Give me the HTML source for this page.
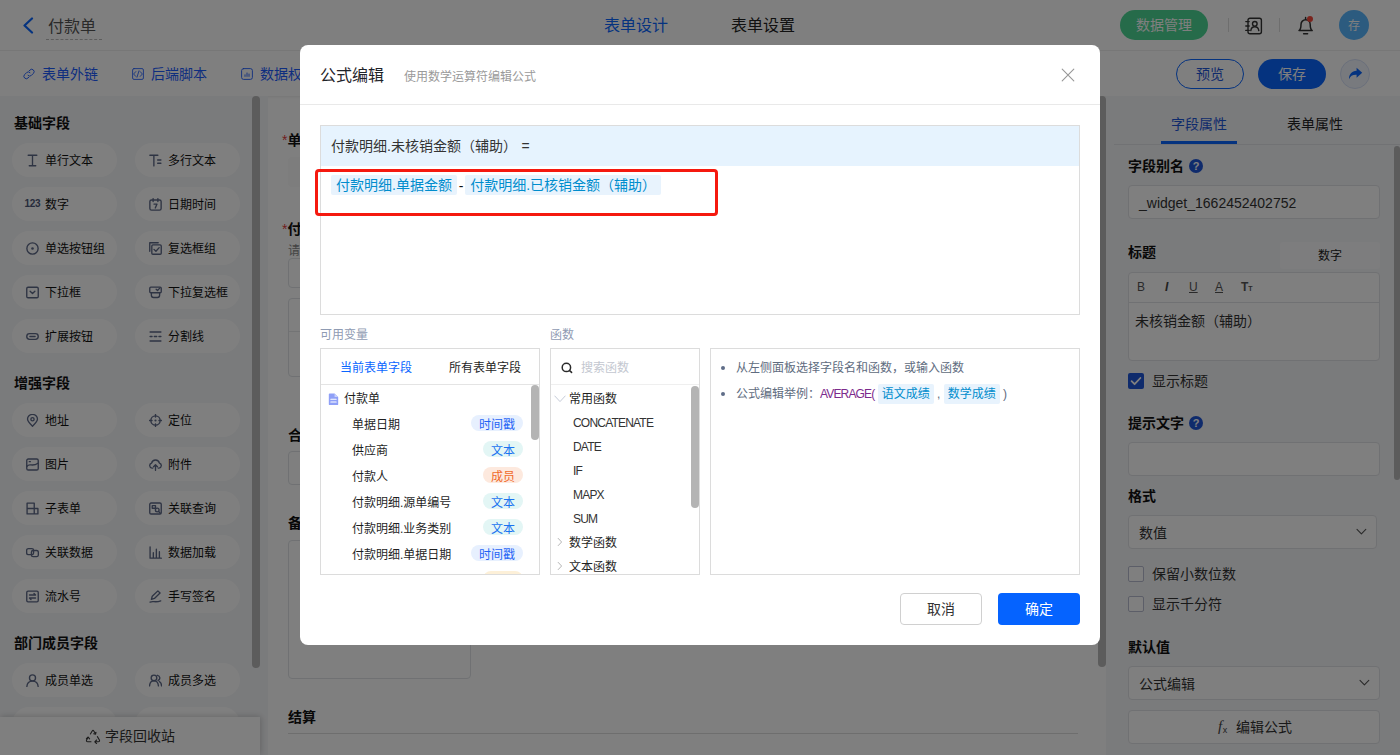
<!DOCTYPE html>
<html lang="zh-CN"><head><meta charset="utf-8"><title>公式编辑</title>
<style>
html,body{margin:0;padding:0}
body{width:1400px;height:755px;overflow:hidden;position:relative;background:#fff;font-family:"Liberation Sans","Noto Sans CJK SC",sans-serif;}
.t{position:absolute;white-space:nowrap;}
.b{position:absolute;box-sizing:border-box;}
#app,#mask,#modal{position:absolute;left:0;top:0;}
#app{width:1400px;height:755px;overflow:hidden;background:#fff}
#mask{width:1400px;height:755px;background:rgba(0,0,0,.5)}
#modal{left:300px;top:45px;width:800px;height:600px;background:#fff;border-radius:8px;overflow:hidden}
.pill{position:absolute;width:105px;height:34px;border-radius:17px;background:#fff}
.inp{position:absolute;box-sizing:border-box;border:1px solid #e0e2e6;border-radius:4px;background:#fff}
.tag{position:absolute;box-sizing:border-box;height:16px;line-height:20px;border-radius:8px;font-size:12px;text-align:center;white-space:nowrap}
.chip{display:inline-block;background:#e8f3fd;color:#008dcd;border-radius:2px;}
</style></head><body>
<div id="app">
<div class="b" style="left:0px;top:50px;width:1400px;height:1px;background:#f1f1f1"></div>
<svg class="b" style="left:22px;top:17px" width="12" height="17" viewBox="0 0 12 17" fill="none" stroke="#0a66ff" stroke-width="2.2" stroke-linecap="round" stroke-linejoin="round"><path d="M10 1.5L2.5 8.5L10 15.5"/></svg>
<div class="t " style="left:48px;top:16.5px;font-size:16px;color:#555;font-weight:400;line-height:20px;">付款单</div>
<div class="b" style="left:46px;top:39px;width:56px;height:1px;border-top:1px dashed #bbb"></div>
<div class="t" style="left:536px;width:200px;text-align:center;top:16.3px;font-size:16px;color:#0a66ff;font-weight:400;line-height:20px;">表单设计</div>
<div class="t" style="left:663px;width:200px;text-align:center;top:16.3px;font-size:16px;color:#222;font-weight:400;line-height:20px;">表单设置</div>
<div class="b" style="left:1120px;top:10px;width:88px;height:30px;background:#4cd694;border-radius:15px"></div>
<div class="t" style="left:1064px;width:200px;text-align:center;top:15px;font-size:14px;color:#fff;font-weight:400;line-height:20px;">数据管理</div>
<div class="b" style="left:1228px;top:18px;width:1px;height:14px;background:#ddd"></div>
<svg class="b" style="left:1245px;top:17px" width="18" height="18" viewBox="0 0 18 18" fill="none" stroke="#333" stroke-width="1.4" stroke-linecap="round" stroke-linejoin="round"><rect x="3" y="1.2" width="13.4" height="15.6" rx="2"/><path d="M0.8 4.6h3.4M0.8 9h3.4M0.8 13.4h3.4"/><circle cx="9.8" cy="6.8" r="2.3"/><path d="M5.8 13.6c0.4-2.6 1.8-3.8 4-3.8s3.6 1.2 4 3.8"/></svg>
<div class="b" style="left:1279px;top:18px;width:1px;height:14px;background:#ddd"></div>
<svg class="b" style="left:1297px;top:15px" width="18" height="21" viewBox="0 0 18 21" fill="none" stroke="#333" stroke-width="1.5" stroke-linecap="round" stroke-linejoin="round"><path d="M2 15.6c1.6-1.2 2-2.6 2-6.2a4.6 4.6 0 0 1 9.2 0c0 3.6 0.4 5 2 6.2zM6.6 18.8h4M8.6 4.4v-2"/></svg>
<div class="b" style="left:1307px;top:16px;width:6px;height:6px;background:#f5483b;border-radius:3px"></div>
<div class="b" style="left:1339px;top:10px;width:30px;height:30px;background:#58b6ff;border-radius:15px"></div>
<div class="t" style="left:1254px;width:200px;text-align:center;top:15.5px;font-size:12px;color:#fff;font-weight:400;line-height:20px;">存</div>
<div class="b" style="left:0px;top:51px;width:1400px;height:45px;background:#fff;box-shadow:0 1px 3px rgba(0,0,0,.08)"></div>
<svg class="b" style="left:23px;top:68px" width="12" height="12" viewBox="0 0 12 12" fill="none" stroke="#1d5cff" stroke-width="0.95" stroke-linecap="round" stroke-linejoin="round"><path d="M5 7.4a2.4 2.4 0 0 0 3.4 0l2-2a2.4 2.4 0 0 0-3.4-3.4l-0.8 0.8M7 4.6a2.4 2.4 0 0 0-3.4 0l-2 2a2.4 2.4 0 0 0 3.4 3.4l0.8-0.8"/></svg>
<div class="t " style="left:42px;top:63.5px;font-size:14px;color:#1d5cff;font-weight:400;line-height:20px;">表单外链</div>
<svg class="b" style="left:132px;top:68px" width="12" height="12" viewBox="0 0 12 12" fill="none" stroke="#1d5cff" stroke-width="0.85" stroke-linecap="round" stroke-linejoin="round"><rect x="0.6" y="0.6" width="10.8" height="10.8" rx="1.4"/><path d="M3.8 3.6l-2.2 2.4l2.2 2.4M8.2 3.6l2.2 2.4l-2.2 2.4M7 2.8l-2 6.4"/></svg>
<div class="t " style="left:151px;top:63.5px;font-size:14px;color:#1d5cff;font-weight:400;line-height:20px;">后端脚本</div>
<svg class="b" style="left:241px;top:68px" width="12" height="12" viewBox="0 0 12 12" fill="none" stroke="#1d5cff" stroke-width="0.9" stroke-linecap="round" stroke-linejoin="round"><rect x="0.6" y="0.6" width="10.8" height="10.8" rx="2"/><path d="M4 8.4v-1.6M6 8.4v-3.4M8 8.4v-2.4"/></svg>
<div class="t " style="left:260px;top:63.5px;font-size:14px;color:#1d5cff;font-weight:400;line-height:20px;">数据权限</div>
<div class="b" style="left:1176px;top:59px;width:68px;height:30px;border:1px solid #0a66ff;border-radius:15px"></div>
<div class="t" style="left:1110px;width:200px;text-align:center;top:64px;font-size:14px;color:#1f56d8;font-weight:400;line-height:20px;">预览</div>
<div class="b" style="left:1258px;top:59px;width:68px;height:30px;background:#0a66ff;border-radius:15px"></div>
<div class="t" style="left:1192px;width:200px;text-align:center;top:64px;font-size:14px;color:#fff;font-weight:400;line-height:20px;">保存</div>
<div class="b" style="left:1340px;top:59px;width:30px;height:30px;background:#f0f4fd;border:1px solid #d6e0f6;border-radius:15px"></div>
<svg class="b" style="left:1348px;top:67px" width="15" height="14" viewBox="0 0 15 14" fill="#0a66ff" stroke="none" stroke-width="1.2" stroke-linecap="round" stroke-linejoin="round"><path d="M8.6 0.8l5.6 5l-5.6 5v-3c-4-0.2-6.2 1.2-7.6 4.4c0-5 2.8-8 7.6-8.4z"/></svg>
<div class="b" style="left:0px;top:96px;width:268px;height:659px;background:#f5f6f8"></div>
<div class="b" style="left:252px;top:96px;width:8px;height:572px;background:#b8b8b8;border-radius:4px"></div>
<div class="t " style="left:14px;top:113px;font-size:14px;color:#111;font-weight:700;line-height:20px;">基础字段</div>
<div class="pill" style="left:12px;top:143px"></div>
<svg class="b" style="left:25.5px;top:153.5px" width="13" height="13" viewBox="0 0 12 12" fill="none" stroke="#5d6887" stroke-width="1.25" stroke-linecap="round" stroke-linejoin="round"><path d="M2 1.2h8M6 1.2v9.6M3 10.8h6"/></svg>
<div class="t " style="left:45px;top:151px;font-size:12px;color:#111;font-weight:400;line-height:20px;">单行文本</div>
<div class="pill" style="left:135px;top:143px"></div>
<svg class="b" style="left:148.5px;top:153.5px" width="13" height="13" viewBox="0 0 12 12" fill="none" stroke="#5d6887" stroke-width="1.25" stroke-linecap="round" stroke-linejoin="round"><path d="M0.8 1.2h7.4M4.5 1.2v9.8M8 5.5h3M8 8.5h3"/></svg>
<div class="t " style="left:168px;top:151px;font-size:12px;color:#111;font-weight:400;line-height:20px;">多行文本</div>
<div class="pill" style="left:12px;top:187px"></div>
<div class="t " style="left:24.5px;top:193.5px;font-size:10px;color:#4e5878;font-weight:700;line-height:20px;letter-spacing:-0.3px">123</div>
<div class="t " style="left:45px;top:195px;font-size:12px;color:#111;font-weight:400;line-height:20px;">数字</div>
<div class="pill" style="left:135px;top:187px"></div>
<svg class="b" style="left:148.5px;top:197.5px" width="13" height="13" viewBox="0 0 12 12" fill="none" stroke="#5d6887" stroke-width="1.25" stroke-linecap="round" stroke-linejoin="round"><rect x="0.8" y="1.8" width="10.4" height="9.4" rx="1.5"/><path d="M3.8 0.6v2.6M8.2 0.6v2.6M4.6 5.6h2.8l-1.6 3.6"/></svg>
<div class="t " style="left:168px;top:195px;font-size:12px;color:#111;font-weight:400;line-height:20px;">日期时间</div>
<div class="pill" style="left:12px;top:231px"></div>
<svg class="b" style="left:25.5px;top:241.5px" width="13" height="13" viewBox="0 0 12 12" fill="none" stroke="#5d6887" stroke-width="1.25" stroke-linecap="round" stroke-linejoin="round"><circle cx="6" cy="6" r="5.2"/><circle cx="6" cy="6" r="1.2" fill="#5d6887" stroke="none"/></svg>
<div class="t " style="left:45px;top:239px;font-size:12px;color:#111;font-weight:400;line-height:20px;">单选按钮组</div>
<div class="pill" style="left:135px;top:231px"></div>
<svg class="b" style="left:148.5px;top:241.5px" width="13" height="13" viewBox="0 0 12 12" fill="none" stroke="#5d6887" stroke-width="1.25" stroke-linecap="round" stroke-linejoin="round"><path d="M0.7 8.5v-7.8h7.8"/><rect x="2.6" y="2.6" width="8.7" height="8.7" rx="1"/><path d="M4.6 6.8l1.8 1.8l3-3.4"/></svg>
<div class="t " style="left:168px;top:239px;font-size:12px;color:#111;font-weight:400;line-height:20px;">复选框组</div>
<div class="pill" style="left:12px;top:275px"></div>
<svg class="b" style="left:25.5px;top:285.5px" width="13" height="13" viewBox="0 0 12 12" fill="none" stroke="#5d6887" stroke-width="1.25" stroke-linecap="round" stroke-linejoin="round"><rect x="0.7" y="1.2" width="10.6" height="9.6" rx="1.2"/><path d="M3.8 4.8l2.2 2.2l2.2-2.2"/></svg>
<div class="t " style="left:45px;top:283px;font-size:12px;color:#111;font-weight:400;line-height:20px;">下拉框</div>
<div class="pill" style="left:135px;top:275px"></div>
<svg class="b" style="left:148.5px;top:285.5px" width="13" height="13" viewBox="0 0 12 12" fill="none" stroke="#5d6887" stroke-width="1.25" stroke-linecap="round" stroke-linejoin="round"><rect x="0.7" y="1" width="10.6" height="5.2" rx="1"/><path d="M6.6 3l1.3 1.2l2-2.2M2.2 6.4v2.2q0 2 2 2h3.6q2 0 2-2v-2.2"/></svg>
<div class="t " style="left:168px;top:283px;font-size:12px;color:#111;font-weight:400;line-height:20px;">下拉复选框</div>
<div class="pill" style="left:12px;top:319px"></div>
<svg class="b" style="left:25.5px;top:329.5px" width="13" height="13" viewBox="0 0 12 12" fill="none" stroke="#5d6887" stroke-width="1.25" stroke-linecap="round" stroke-linejoin="round"><rect x="0.7" y="3.4" width="10.6" height="5.2" rx="2.6"/><path d="M3.6 6h4.8"/></svg>
<div class="t " style="left:45px;top:327px;font-size:12px;color:#111;font-weight:400;line-height:20px;">扩展按钮</div>
<div class="pill" style="left:135px;top:319px"></div>
<svg class="b" style="left:148.5px;top:329.5px" width="13" height="13" viewBox="0 0 12 12" fill="none" stroke="#5d6887" stroke-width="1.25" stroke-linecap="round" stroke-linejoin="round"><path d="M1 1.8h10M1 6h1.8M4.9 6h2.2M9.2 6h1.8M1 10.2h10"/></svg>
<div class="t " style="left:168px;top:327px;font-size:12px;color:#111;font-weight:400;line-height:20px;">分割线</div>
<div class="t " style="left:14px;top:373px;font-size:14px;color:#111;font-weight:700;line-height:20px;">增强字段</div>
<div class="pill" style="left:12px;top:403px"></div>
<svg class="b" style="left:25.5px;top:413.5px" width="13" height="13" viewBox="0 0 12 12" fill="none" stroke="#5d6887" stroke-width="1.25" stroke-linecap="round" stroke-linejoin="round"><path d="M6 11.3c-3-2.8-4.6-4.7-4.6-6.6a4.6 4.3 0 0 1 9.2 0c0 1.9-1.6 3.8-4.6 6.6z"/><circle cx="6" cy="4.8" r="1.5"/></svg>
<div class="t " style="left:45px;top:411px;font-size:12px;color:#111;font-weight:400;line-height:20px;">地址</div>
<div class="pill" style="left:135px;top:403px"></div>
<svg class="b" style="left:148.5px;top:413.5px" width="13" height="13" viewBox="0 0 12 12" fill="none" stroke="#5d6887" stroke-width="1.25" stroke-linecap="round" stroke-linejoin="round"><circle cx="6" cy="6" r="4.3"/><circle cx="6" cy="6" r="1" fill="#5d6887" stroke="none"/><path d="M6 0.4v2.4M6 9.2v2.4M0.4 6h2.4M9.2 6h2.4"/></svg>
<div class="t " style="left:168px;top:411px;font-size:12px;color:#111;font-weight:400;line-height:20px;">定位</div>
<div class="pill" style="left:12px;top:447px"></div>
<svg class="b" style="left:25.5px;top:457.5px" width="13" height="13" viewBox="0 0 12 12" fill="none" stroke="#5d6887" stroke-width="1.25" stroke-linecap="round" stroke-linejoin="round"><rect x="0.7" y="0.9" width="10.6" height="10.2" rx="1.4"/><path d="M0.9 7.6c2.6-3.4 4.4 1.2 10.2-2.8M3 3.4h1"/></svg>
<div class="t " style="left:45px;top:455px;font-size:12px;color:#111;font-weight:400;line-height:20px;">图片</div>
<div class="pill" style="left:135px;top:447px"></div>
<svg class="b" style="left:148.5px;top:457.5px" width="13" height="13" viewBox="0 0 12 12" fill="none" stroke="#5d6887" stroke-width="1.25" stroke-linecap="round" stroke-linejoin="round"><path d="M3.4 9.4h-0.6a2.4 2.4 0 0 1-0.4-4.7a3.7 3.7 0 0 1 7.2 0a2.4 2.4 0 0 1-0.4 4.7h-0.6M6 11.4v-5M4.2 8l1.8-1.8l1.8 1.8"/></svg>
<div class="t " style="left:168px;top:455px;font-size:12px;color:#111;font-weight:400;line-height:20px;">附件</div>
<div class="pill" style="left:12px;top:491px"></div>
<svg class="b" style="left:25.5px;top:501.5px" width="13" height="13" viewBox="0 0 12 12" fill="none" stroke="#5d6887" stroke-width="1.25" stroke-linecap="round" stroke-linejoin="round"><path d="M1 1h6.6v10h-6.6zM7.6 6h3.4v5h-3.4M1 6h6.6"/></svg>
<div class="t " style="left:45px;top:499px;font-size:12px;color:#111;font-weight:400;line-height:20px;">子表单</div>
<div class="pill" style="left:135px;top:491px"></div>
<svg class="b" style="left:148.5px;top:501.5px" width="13" height="13" viewBox="0 0 12 12" fill="none" stroke="#5d6887" stroke-width="1.25" stroke-linecap="round" stroke-linejoin="round"><rect x="0.7" y="0.9" width="10.6" height="10.2" rx="1.2"/><path d="M3 3.4h3v2.4h-3z"/><circle cx="7.6" cy="7.4" r="1.7"/><path d="M8.9 8.7l1.6 1.6"/></svg>
<div class="t " style="left:168px;top:499px;font-size:12px;color:#111;font-weight:400;line-height:20px;">关联查询</div>
<div class="pill" style="left:12px;top:535px"></div>
<svg class="b" style="left:25.5px;top:545.5px" width="13" height="13" viewBox="0 0 12 12" fill="none" stroke="#5d6887" stroke-width="1.25" stroke-linecap="round" stroke-linejoin="round"><rect x="0.6" y="2.4" width="6.4" height="5.6" rx="1.6"/><rect x="5" y="4.2" width="6.4" height="5.6" rx="1.6"/></svg>
<div class="t " style="left:45px;top:543px;font-size:12px;color:#111;font-weight:400;line-height:20px;">关联数据</div>
<div class="pill" style="left:135px;top:535px"></div>
<svg class="b" style="left:148.5px;top:545.5px" width="13" height="13" viewBox="0 0 12 12" fill="none" stroke="#5d6887" stroke-width="1.25" stroke-linecap="round" stroke-linejoin="round"><path d="M1 0.8v10.4h10.4M4 10.8v-4.6M6.8 10.8v-7.8M9.6 10.8v-5.6"/></svg>
<div class="t " style="left:168px;top:543px;font-size:12px;color:#111;font-weight:400;line-height:20px;">数据加载</div>
<div class="pill" style="left:12px;top:579px"></div>
<svg class="b" style="left:25.5px;top:589.5px" width="13" height="13" viewBox="0 0 12 12" fill="none" stroke="#5d6887" stroke-width="1.25" stroke-linecap="round" stroke-linejoin="round"><rect x="0.7" y="1.1" width="10.6" height="9.8" rx="1.2"/><path d="M3.2 4.6h5.6l-1.4-1.4M8.8 7.4h-5.6l1.4 1.4"/></svg>
<div class="t " style="left:45px;top:587px;font-size:12px;color:#111;font-weight:400;line-height:20px;">流水号</div>
<div class="pill" style="left:135px;top:579px"></div>
<svg class="b" style="left:148.5px;top:589.5px" width="13" height="13" viewBox="0 0 12 12" fill="none" stroke="#5d6887" stroke-width="1.25" stroke-linecap="round" stroke-linejoin="round"><path d="M2.2 8.6l0.8-2.8l5.2-5l2 2l-5.2 5zM1 11.2c2.6-1.4 4.8 0.8 9.8-1.2"/></svg>
<div class="t " style="left:168px;top:587px;font-size:12px;color:#111;font-weight:400;line-height:20px;">手写签名</div>
<div class="t " style="left:14px;top:633px;font-size:14px;color:#111;font-weight:700;line-height:20px;">部门成员字段</div>
<div class="pill" style="left:12px;top:663px"></div>
<svg class="b" style="left:25.5px;top:673.5px" width="13" height="13" viewBox="0 0 12 12" fill="none" stroke="#5d6887" stroke-width="1.25" stroke-linecap="round" stroke-linejoin="round"><circle cx="6" cy="3.6" r="2.8"/><path d="M0.8 11.6c0.2-3.2 2.2-5 5.2-5s5 1.8 5.2 5"/></svg>
<div class="t " style="left:45px;top:671px;font-size:12px;color:#111;font-weight:400;line-height:20px;">成员单选</div>
<div class="pill" style="left:135px;top:663px"></div>
<svg class="b" style="left:148.5px;top:673.5px" width="13" height="13" viewBox="0 0 12 12" fill="none" stroke="#5d6887" stroke-width="1.25" stroke-linecap="round" stroke-linejoin="round"><circle cx="4.6" cy="3.6" r="2.6"/><path d="M0.5 11c0.2-3 1.8-4.6 4.1-4.6s3.9 1.6 4.1 4.6M7.8 1.2a2.5 2.5 0 0 1 0.6 4.8M9.6 7c1.2 0.6 1.9 2 2 4"/></svg>
<div class="t " style="left:168px;top:671px;font-size:12px;color:#111;font-weight:400;line-height:20px;">成员多选</div>
<div class="pill" style="left:12px;top:707px"></div>
<div class="pill" style="left:135px;top:707px"></div>
<div class="b" style="left:0px;top:717px;width:260px;height:38px;background:#fff;box-shadow:0 -1px 6px rgba(0,0,0,.12), 2px 0 6px rgba(0,0,0,.08)"></div>
<svg class="b" style="left:84.5px;top:728.5px" width="16" height="15" viewBox="0 0 16 15" fill="none" stroke="#3a3a3a" stroke-width="1.1" stroke-linecap="round" stroke-linejoin="round"><path d="M5.4 5l1.8-3q0.8-1.2 1.6 0l1.6 2.8M8.6 4.8l2 0.4l0.4-2M12.4 7.6l2 3.4q0.6 1.6-1.2 1.8h-3.4M11.6 11l-1.8 1.8l1.8 1.8M6 12.8h-3.2q-1.8-0.2-1.2-1.8l1.6-2.8M1.4 9.6l1.8-1.6l1.4 1.8"/></svg>
<div class="t " style="left:105px;top:726px;font-size:14px;color:#333;font-weight:400;line-height:20px;">字段回收站</div>
<div class="b" style="left:1098px;top:96px;width:8px;height:571px;background:#b8b8b8;border-radius:4px"></div>
<div class="t " style="left:282px;top:130px;font-size:14px;color:#111;font-weight:700;line-height:20px;"><span style="color:#e23c3c;font-weight:400">*</span>单据日期</div>
<div class="b" style="left:288px;top:157px;width:360px;height:30px;background:#fafafa;border-radius:4px"></div>
<div class="t " style="left:282px;top:219px;font-size:14px;color:#111;font-weight:700;line-height:20px;"><span style="color:#e23c3c;font-weight:400">*</span>付款明细</div>
<div class="t " style="left:288px;top:241px;font-size:12px;color:#888;font-weight:400;line-height:20px;">请添加付款明细</div>
<div class="inp" style="left:288px;top:258px;width:110px;height:30px"></div>
<div class="inp" style="left:288px;top:298px;width:790px;height:79px"></div>
<div class="b" style="left:289px;top:331px;width:788px;height:1px;background:#e6e8eb"></div>
<div class="t " style="left:288px;top:425px;font-size:14px;color:#111;font-weight:700;line-height:20px;">合计金额</div>
<div class="inp" style="left:288px;top:451px;width:183px;height:34px"></div>
<div class="t " style="left:288px;top:513px;font-size:14px;color:#111;font-weight:700;line-height:20px;">备注</div>
<div class="inp" style="left:288px;top:540px;width:183px;height:139px"></div>
<div class="t " style="left:288px;top:707px;font-size:14px;color:#111;font-weight:700;line-height:20px;">结算</div>
<div class="b" style="left:288px;top:733px;width:790px;height:1px;background:#dcdcdc"></div>
<div class="b" style="left:1106px;top:96px;width:294px;height:659px;background:#f5f6f8"></div>
<div class="b" style="left:1114px;top:144px;width:286px;height:1px;background:#e2e4e8"></div>
<div class="t" style="left:1099px;width:200px;text-align:center;top:114px;font-size:14px;color:#1f56d8;font-weight:400;line-height:20px;">字段属性</div>
<div class="t" style="left:1215px;width:200px;text-align:center;top:114px;font-size:14px;color:#222;font-weight:400;line-height:20px;">表单属性</div>
<div class="b" style="left:1161px;top:141px;width:76px;height:3px;background:#0a66ff"></div>
<div class="b" style="left:1394px;top:146px;width:6px;height:334px;background:#b8b8b8;border-radius:3px"></div>
<div class="t " style="left:1128px;top:156px;font-size:14px;color:#111;font-weight:700;line-height:20px;">字段别名</div>
<div class="b" style="left:1189px;top:159px;width:14px;height:14px;background:#1f56d8;border-radius:7px"></div>
<div class="t" style="left:1189px;width:14px;text-align:center;top:156px;font-size:11px;color:#fff;font-weight:700;line-height:20px;">?</div>
<div class="inp" style="left:1128px;top:185px;width:252px;height:34px"></div>
<div class="t " style="left:1139px;top:192.5px;font-size:14px;color:#333;font-weight:400;line-height:20px;">_widget_1662452402752</div>
<div class="t " style="left:1128px;top:242px;font-size:14px;color:#111;font-weight:700;line-height:20px;">标题</div>
<div class="b" style="left:1280px;top:242px;width:100px;height:27px;background:#fafbfc;border-radius:3px"></div>
<div class="t" style="left:1230px;width:200px;text-align:center;top:245.5px;font-size:12px;color:#222;font-weight:400;line-height:20px;">数字</div>
<div class="inp" style="left:1128px;top:272px;width:252px;height:89px"></div>
<div class="b" style="left:1129px;top:302px;width:250px;height:1px;background:#e0e2e6"></div>
<div class="t " style="left:1137px;top:277px;font-size:12px;color:#555;font-weight:400;line-height:20px;">B</div>
<div class="t " style="left:1165px;top:277px;font-size:12px;color:#444;font-weight:700;line-height:20px;font-style:italic">I</div>
<div class="t " style="left:1189px;top:277px;font-size:12px;color:#555;font-weight:400;line-height:20px;text-decoration:underline">U</div>
<div class="t " style="left:1215px;top:277px;font-size:12px;color:#555;font-weight:400;line-height:20px;text-decoration:underline">A</div>
<div class="t " style="left:1241px;top:277px;font-size:12px;color:#555;font-weight:700;line-height:20px;">T<span style="font-size:7px">T</span></div>
<div class="t " style="left:1135px;top:311px;font-size:14px;color:#333;font-weight:400;line-height:20px;">未核销金额（辅助）</div>
<div class="b" style="left:1128px;top:373px;width:16px;height:16px;background:#1f56d8;border-radius:2px"></div>
<svg class="b" style="left:1128px;top:373px" width="16" height="16" viewBox="0 0 16 16" fill="none" stroke="#fff" stroke-width="1.8" stroke-linecap="round" stroke-linejoin="round"><path d="M3.6 8.2l3 3l5.8-6.2"/></svg>
<div class="t " style="left:1152px;top:371px;font-size:14px;color:#333;font-weight:400;line-height:20px;">显示标题</div>
<div class="t " style="left:1128px;top:413px;font-size:14px;color:#111;font-weight:700;line-height:20px;">提示文字</div>
<div class="b" style="left:1189px;top:416px;width:14px;height:14px;background:#1f56d8;border-radius:7px"></div>
<div class="t" style="left:1189px;width:14px;text-align:center;top:413px;font-size:11px;color:#fff;font-weight:700;line-height:20px;">?</div>
<div class="inp" style="left:1128px;top:442px;width:252px;height:34px"></div>
<div class="t " style="left:1128px;top:486px;font-size:14px;color:#111;font-weight:700;line-height:20px;">格式</div>
<div class="inp" style="left:1128px;top:515px;width:249px;height:34px"></div>
<div class="t " style="left:1139px;top:522.5px;font-size:14px;color:#333;font-weight:400;line-height:20px;">数值</div>
<svg class="b" style="left:1356px;top:528px" width="11" height="8" viewBox="0 0 11 8" fill="none" stroke="#555" stroke-width="1.1" stroke-linecap="round" stroke-linejoin="round"><path d="M1 1.4l4.4 4.4l4.4-4.4"/></svg>
<div class="b" style="left:1128px;top:566px;width:16px;height:16px;border:1px solid #b9bdd0;border-radius:2px;background:#fff"></div>
<div class="t " style="left:1152px;top:564px;font-size:14px;color:#333;font-weight:400;line-height:20px;">保留小数位数</div>
<div class="b" style="left:1128px;top:596px;width:16px;height:16px;border:1px solid #b9bdd0;border-radius:2px;background:#fff"></div>
<div class="t " style="left:1152px;top:594px;font-size:14px;color:#333;font-weight:400;line-height:20px;">显示千分符</div>
<div class="t " style="left:1128px;top:637px;font-size:14px;color:#111;font-weight:700;line-height:20px;">默认值</div>
<div class="inp" style="left:1128px;top:666px;width:252px;height:34px"></div>
<div class="t " style="left:1139px;top:673.5px;font-size:14px;color:#333;font-weight:400;line-height:20px;">公式编辑</div>
<svg class="b" style="left:1359px;top:679px" width="11" height="8" viewBox="0 0 11 8" fill="none" stroke="#555" stroke-width="1.1" stroke-linecap="round" stroke-linejoin="round"><path d="M1 1.4l4.4 4.4l4.4-4.4"/></svg>
<div class="inp" style="left:1128px;top:710px;width:252px;height:34px"></div>
<div class="t " style="left:1218px;top:715.5px;font-size:14px;color:#444;font-weight:400;line-height:20px;"><i style="font-family:'Liberation Serif',serif;font-size:15px">f</i><span style="font-size:9px;position:relative;top:2px;left:0.5px">x</span></div>
<div class="t " style="left:1236px;top:716.8px;font-size:14px;color:#333;font-weight:400;line-height:20px;">编辑公式</div>
</div>
<div id="mask"></div>
<div id="modal">
<div class="t " style="left:20px;top:20.5px;font-size:16px;color:#1f2329;font-weight:400;line-height:20px;">公式编辑</div>
<div class="t " style="left:104px;top:22px;font-size:12px;color:#9a9a9a;font-weight:400;line-height:20px;">使用数学运算符编辑公式</div>
<svg class="b" style="left:760.5px;top:23px" width="14" height="14" viewBox="0 0 14 14" fill="none" stroke="#979797" stroke-width="1.1" stroke-linecap="round" stroke-linejoin="round"><path d="M1.2 1.2l11.6 11.6M12.8 1.2l-11.6 11.6"/></svg>
<div class="b" style="left:0px;top:59px;width:800px;height:1px;background:#e9e9e9"></div>
<div class="b" style="left:20px;top:80px;width:760px;height:190px;border:1px solid #dcdcdc"></div>
<div class="b" style="left:21px;top:81px;width:758px;height:40px;background:#e6f3fe"></div>
<div class="t " style="left:31px;top:91px;font-size:14px;color:#333;font-weight:400;line-height:20px;">付款明细.未核销金额（辅助）<span style="margin-left:4.5px">=</span></div>
<div class="t" style="left:31px;top:130px;font-size:14px;line-height:20px;color:#333"><span class="chip" style="padding:0 5px">付款明细.单据金额</span><span style="margin:0 1.8px;color:#111;position:relative;top:1px">-</span><span class="chip" style="padding:0 5px">付款明细.已核销金额（辅助）</span></div>
<div class="t " style="left:20px;top:279.5px;font-size:12px;color:#8f9bb3;font-weight:400;line-height:20px;">可用变量</div>
<div class="t " style="left:250px;top:279.5px;font-size:12px;color:#8f9bb3;font-weight:400;line-height:20px;">函数</div>
<div class="b" style="left:20px;top:303px;width:220px;height:227px;border:1px solid #dcdcdc;background:#fff;overflow:hidden"></div>
<div class="b" style="left:21px;top:339px;width:218px;height:1px;background:#e4e4e4"></div>
<div class="t " style="left:40px;top:312.5px;font-size:12px;color:#0a66ff;font-weight:400;line-height:20px;">当前表单字段</div>
<div class="t " style="left:149px;top:312.5px;font-size:12px;color:#1f1f1f;font-weight:400;line-height:20px;">所有表单字段</div>
<svg class="b" style="left:27.5px;top:347.5px" width="11" height="12.5" viewBox="0 0 10 12" fill="none" stroke="none" stroke-width="1.2" stroke-linecap="round" stroke-linejoin="round"><path d="M0.5 1.2q0-0.8 0.8-0.8h4.7l3.5 3.5v6.9q0 0.8-0.8 0.8h-7.4q-0.8 0-0.8-0.8z" fill="#8fa0f7" stroke="none"/><path d="M2.4 6h5.2M2.4 8.6h5.2" stroke="#fff" stroke-width="1"/><path d="M6 0.4v3.5h3.5" fill="#c9d1fb" stroke="none"/></svg>
<div class="t " style="left:44px;top:343.5px;font-size:12px;color:#1f1f1f;font-weight:400;line-height:20px;">付款单</div>
<div class="t " style="left:52px;top:369.5px;font-size:12px;color:#1f1f1f;font-weight:400;line-height:20px;">单据日期</div>
<div class="tag" style="left:171px;top:370px;width:52px;background:#e7f0fe;color:#1f63f5">时间戳</div>
<div class="t " style="left:52px;top:395.5px;font-size:12px;color:#1f1f1f;font-weight:400;line-height:20px;">供应商</div>
<div class="tag" style="left:183px;top:396px;width:40px;background:#e3f6f5;color:#1a73f0">文本</div>
<div class="t " style="left:52px;top:421.5px;font-size:12px;color:#1f1f1f;font-weight:400;line-height:20px;">付款人</div>
<div class="tag" style="left:183px;top:422px;width:40px;background:#fde9de;color:#f0692a">成员</div>
<div class="t " style="left:52px;top:447.5px;font-size:12px;color:#1f1f1f;font-weight:400;line-height:20px;">付款明细.源单编号</div>
<div class="tag" style="left:183px;top:448px;width:40px;background:#e3f6f5;color:#1a73f0">文本</div>
<div class="t " style="left:52px;top:473.5px;font-size:12px;color:#1f1f1f;font-weight:400;line-height:20px;">付款明细.业务类别</div>
<div class="tag" style="left:183px;top:474px;width:40px;background:#e3f6f5;color:#1a73f0">文本</div>
<div class="t " style="left:52px;top:499.5px;font-size:12px;color:#1f1f1f;font-weight:400;line-height:20px;">付款明细.单据日期</div>
<div class="tag" style="left:171px;top:500px;width:52px;background:#e7f0fe;color:#1f63f5">时间戳</div>
<div class="b" style="left:183px;top:526px;width:40px;height:3px;overflow:hidden"><div class="tag" style="left:0;top:0;width:40px;background:#fdf0d8"></div></div>
<div class="b" style="left:231px;top:340px;width:8px;height:55px;background:#b4b4b4;border-radius:4px"></div>
<div class="b" style="left:250px;top:303px;width:150px;height:227px;border:1px solid #dcdcdc;background:#fff;overflow:hidden"></div>
<div class="b" style="left:251px;top:339px;width:148px;height:1px;background:#efefef"></div>
<svg class="b" style="left:261px;top:317px" width="12" height="12" viewBox="0 0 12 12" fill="none" stroke="#2a2a2a" stroke-width="1.5" stroke-linecap="round" stroke-linejoin="round"><circle cx="5.4" cy="5.4" r="4.2"/><path d="M8.6 8.6l2 1.8"/></svg>
<div class="t " style="left:281px;top:312.5px;font-size:12px;color:#c3c7d0;font-weight:400;line-height:20px;">搜索函数</div>
<svg class="b" style="left:254px;top:349.5px" width="12" height="8" viewBox="0 0 12 8" fill="none" stroke="#c5cbd8" stroke-width="1" stroke-linecap="round" stroke-linejoin="round"><path d="M0.8 1l5.2 5.6l5.2-5.6"/></svg>
<div class="t " style="left:269px;top:343.5px;font-size:12px;color:#1f1f1f;font-weight:400;line-height:20px;">常用函数</div>
<div class="t " style="left:273px;top:367.5px;font-size:12px;color:#333;font-weight:400;line-height:20px;letter-spacing:-0.8px">CONCATENATE</div>
<div class="t " style="left:273px;top:391.5px;font-size:12px;color:#333;font-weight:400;line-height:20px;letter-spacing:-0.8px">DATE</div>
<div class="t " style="left:273px;top:415.5px;font-size:12px;color:#333;font-weight:400;line-height:20px;letter-spacing:-0.8px">IF</div>
<div class="t " style="left:273px;top:439.5px;font-size:12px;color:#333;font-weight:400;line-height:20px;letter-spacing:-0.8px">MAPX</div>
<div class="t " style="left:273px;top:463.5px;font-size:12px;color:#333;font-weight:400;line-height:20px;letter-spacing:-0.8px">SUM</div>
<svg class="b" style="left:257px;top:492px" width="6" height="10" viewBox="0 0 6 10" fill="none" stroke="#b5b5b5" stroke-width="1" stroke-linecap="round" stroke-linejoin="round"><path d="M1.2 1.4l3.4 3.6l-3.4 3.6"/></svg>
<div class="t " style="left:269px;top:487.5px;font-size:12px;color:#1f1f1f;font-weight:400;line-height:20px;">数学函数</div>
<svg class="b" style="left:257px;top:516px" width="6" height="10" viewBox="0 0 6 10" fill="none" stroke="#b5b5b5" stroke-width="1" stroke-linecap="round" stroke-linejoin="round"><path d="M1.2 1.4l3.4 3.6l-3.4 3.6"/></svg>
<div class="t " style="left:269px;top:511.5px;font-size:12px;color:#1f1f1f;font-weight:400;line-height:20px;">文本函数</div>
<div class="b" style="left:391px;top:341px;width:8px;height:122px;background:#b4b4b4;border-radius:4px"></div>
<div class="b" style="left:410px;top:303px;width:370px;height:227px;border:1px solid #dcdcdc;background:#fff"></div>
<div class="b" style="left:421px;top:321px;width:4px;height:4px;background:#5f6d88;border-radius:2px"></div>
<div class="b" style="left:421px;top:347px;width:4px;height:4px;background:#5f6d88;border-radius:2px"></div>
<div class="t " style="left:436px;top:312.5px;font-size:12px;color:#606c80;font-weight:400;line-height:20px;">从左侧面板选择字段名和函数，或输入函数</div>
<div class="t" style="left:436px;top:339px;font-size:12px;line-height:20px;color:#606c80">公式编辑举例：<span style="color:#7c2a8c;letter-spacing:-0.85px">AVERAGE(</span> <span class="chip" style="padding:0 4px">语文成绩</span> , <span class="chip" style="padding:0 4px">数学成绩</span> )</div>
<div class="b" style="left:600px;top:548px;width:82px;height:32px;border:1px solid #d0d0d0;border-radius:4px;background:#fff"></div>
<div class="t" style="left:541px;width:200px;text-align:center;top:553.7px;font-size:14px;color:#333;font-weight:400;line-height:20px;">取消</div>
<div class="b" style="left:698px;top:548px;width:82px;height:32px;background:#0563ff;border-radius:4px"></div>
<div class="t" style="left:639px;width:200px;text-align:center;top:553.7px;font-size:14px;color:#fff;font-weight:400;line-height:20px;">确定</div>
</div>
<div class="b" style="left:315px;top:169px;width:403px;height:47px;border:3px solid #f5190f;border-radius:4px"></div>
</body></html>
